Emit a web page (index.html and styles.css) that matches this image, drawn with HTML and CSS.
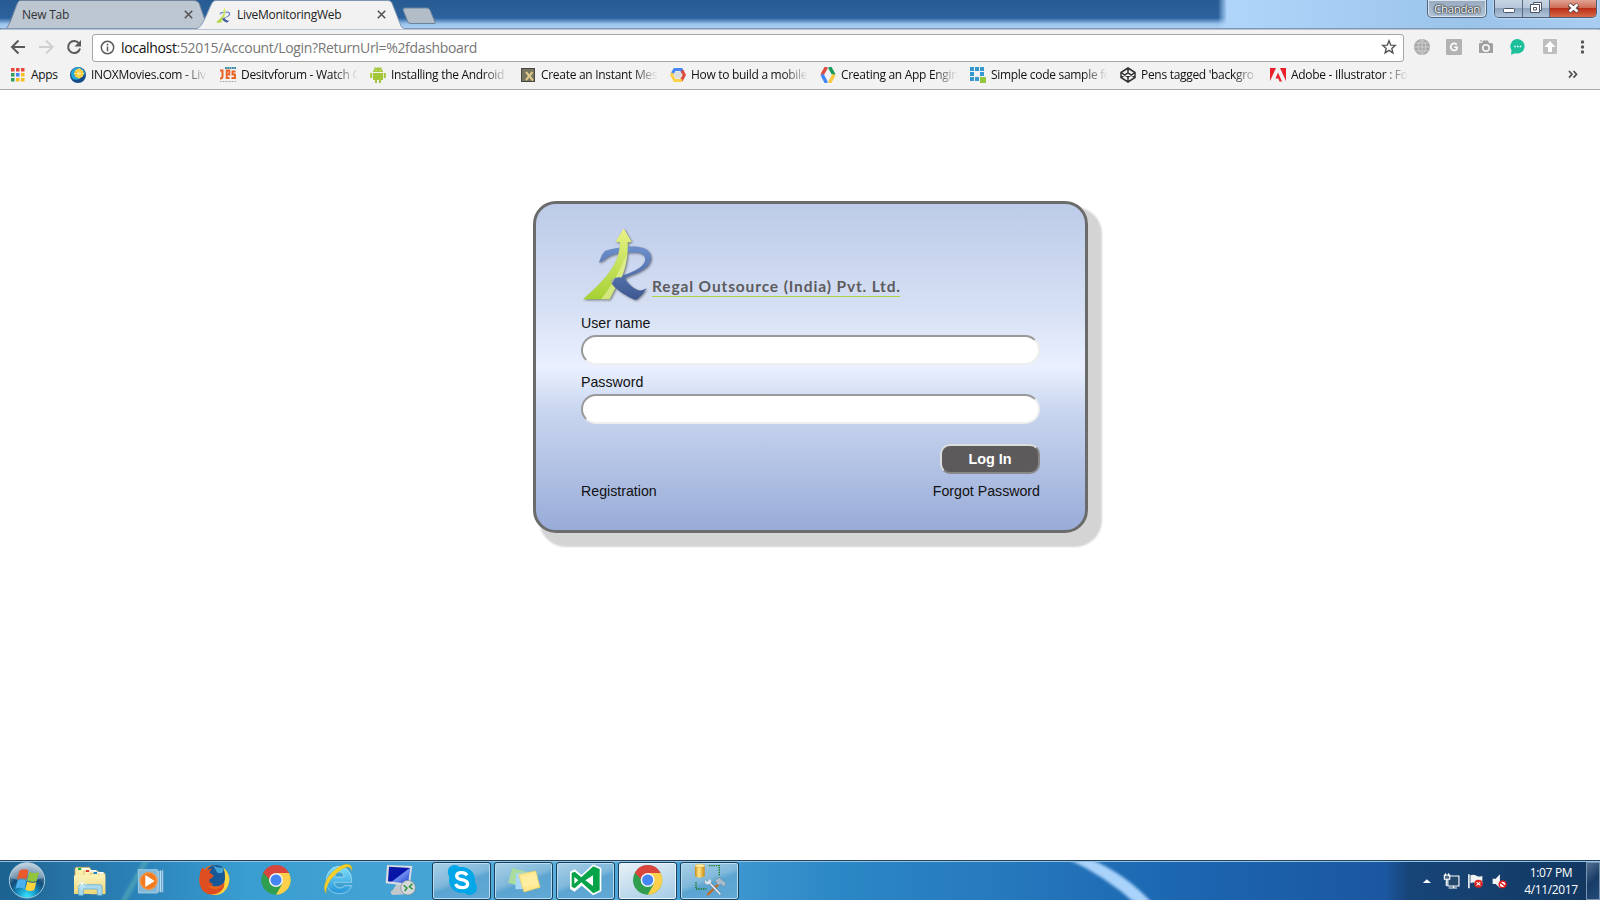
FILE: index.html
```html
<!DOCTYPE html>
<html lang="en">
<head>
<meta charset="utf-8">
<title>LiveMonitoringWeb</title>
<link rel="stylesheet" href="styles.css">
</head>
<body>
<svg width="0" height="0" class="defs">
  <defs>
    <linearGradient id="arrow" x1="0" y1="0" x2="0" y2="1"><stop offset="0" stop-color="#e9f287"/><stop offset="1" stop-color="#a5d133"/></linearGradient>
    <linearGradient id="rblue" x1="0" y1="0" x2="0" y2="1"><stop offset="0" stop-color="#6d90cd"/><stop offset="1" stop-color="#3d5690"/></linearGradient>
    <linearGradient id="folder" x1="0" y1="0" x2="0" y2="1"><stop offset="0" stop-color="#fbf3b7"/><stop offset="1" stop-color="#edd47a"/></linearGradient>
    <radialGradient id="orb" cx=".5" cy=".95" r=".9"><stop offset="0" stop-color="#35e3ff"/><stop offset=".35" stop-color="#1486b8"/><stop offset=".6" stop-color="#124b78"/><stop offset="1" stop-color="#9fb9cc"/></radialGradient>
    <linearGradient id="screen" x1="0" y1="0" x2="1" y2="1"><stop offset="0" stop-color="#0a1ca8"/><stop offset=".5" stop-color="#0612a8"/><stop offset=".55" stop-color="#6f8ff0"/><stop offset="1" stop-color="#1d3fd0"/></linearGradient>
    <linearGradient id="gold" x1="0" y1="0" x2="1" y2="0"><stop offset="0" stop-color="#c98a10"/><stop offset=".4" stop-color="#ffe88a"/><stop offset="1" stop-color="#c98a10"/></linearGradient>
    <linearGradient id="ie" x1="0" y1="0" x2="0" y2="1"><stop offset="0" stop-color="#7fe0fb"/><stop offset="1" stop-color="#2493d8"/></linearGradient>
    <symbol id="regal" viewBox="180 105 225 230">
      <path fill="url(#rblue)" d="M240 217 C245 203 251 188 259 182 C295 171 345 165 370 173 C397 180 402 204 390 222 C377 243 340 252 318 264 C325 282 350 299 362 301 C370 302 376 296 383 294 C373 309 361 324 350 329 C331 323 284 295 277 276 C275 265 287 263 303 259 C333 249 372 235 378 212 C382 194 365 187 344 187 C308 187 283 190 268 200 C257 207 250 216 240 217Z"/>
      <path fill="url(#arrow)" d="M192 327 C232 292 277 250 294 205 C300 188 302 172 303 156 L290 155 L314 115 L338 155 L326 157 C328 192 322 228 308 261 C285 260 275 266 277 279 C280 286 285 290 289 294 L272 327Z"/>
      <path fill="#f2f8b5" opacity=".55" d="M246 327 C277 288 308 233 323 192 C322 221 317 242 308 261 C285 260 275 266 277 279 L289 294 L272 327Z"/>
    </symbol>
    <symbol id="chrome" viewBox="0 0 90 90">
      <circle cx="45" cy="45" r="44" fill="#2f9e4f"/>
      <path d="M45 45 L6 24 A44 44 0 0 1 84 24Z" fill="#d9453d"/>
      <path d="M45 24 H84 A44 44 0 0 1 45 89 L64 56Z" fill="#fcd04b"/>
      <path d="M6 24 L27 57 L45 45 V24Z" fill="#2f9e4f"/>
      <path d="M7 23 H45 L27 45Z" fill="#d9453d"/>
      <circle cx="45" cy="45" r="21" fill="#f4f4f4"/><circle cx="45" cy="45" r="16.500" fill="#4486f4"/>
    </symbol>
  </defs>
</svg>

<div class="desktop">
  <header class="tabstrip">
    <svg class="tabshapes" width="1600" height="30" viewBox="0 0 1600 30">
      <path d="M6 28.500 C10 26 14 10 18 2 Q19 .5 21 .5 H194 Q197 .5 199 3 L208 28.500Z" fill="#bdc7d2" stroke="#72839a"/>
      <path d="M0 30 V28.500 H197 C203 27 208 10 212 3 Q213 .5 216 .5 H388 Q391 .5 392 3 L401 26 Q402 28.500 405 28.500 H1600 V30Z" fill="#f2f2f2" stroke="#7f97b5"/>
      <path d="M403 10 Q403 8 405 8 H427 Q429 8 430 10 L435 22 Q436 23.500 434 23.500 H411 Q409 23.500 408 22Z" fill="#b3bdc8" stroke="#6d839d"/>
    </svg>
    <div class="tab tab-idle"><span>New Tab</span><svg width="9" height="9" viewBox="0 0 9 9"><path class="x" d="M.8.8l7.400 7.400M8.200.8L.8 8.200"/></svg></div>
    <div class="tab tab-active"><svg width="16" height="16"><use href="#regal"/></svg><span class="tab-title">LiveMonitoringWeb</span><svg width="9" height="9" viewBox="0 0 9 9"><path class="x" d="M.8.8l7.400 7.400M8.200.8L.8 8.200"/></svg></div>
    <div class="winctl">
      <div class="user">Chandan</div>
      <div class="btns">
        <div class="wb min"><svg width="28" height="17"><rect x="8.500" y="8.500" width="11" height="4" rx="1" fill="#fff" stroke="#4a5365"/></svg></div>
        <div class="wb max"><svg width="27" height="17"><path d="M10.500 2.500h8v8h-2v2h-9v-8h3z" fill="#fff" stroke="#4a5365"/><path d="M10.500 7.500h3v2.500h-3zM10.500 4.500h6v6" fill="none" stroke="#4a5365"/></svg></div>
        <div class="wb close"><svg width="46" height="17"><path d="M19 4.500l9 7M28 4.500l-9 7" stroke="#59363a" stroke-width="4.600"/><path d="M19.500 4.500l8 7M27.500 4.500l-8 7" stroke="#fff" stroke-width="2.800"/></svg></div>
      </div>
    </div>
  </header>

  <nav class="toolbar">
    <svg class="navicons" width="92" height="34" viewBox="0 0 92 34" fill="none" stroke="#5a5a5a" stroke-width="2">
      <path d="M25 18H12.500M18.500 11.500L12 18l6.500 6.500"/>
      <path stroke="#d0d0d0" d="M39 18h12.500M46 11.500l6.500 6.500-6.500 6.500"/>
      <path d="M79 14.500A6 6 0 1 0 80 19.500"/><path fill="#5a5a5a" stroke="none" d="M81 11v6.500h-6.500z"/>
    </svg>
    <div class="omnibox">
      <svg width="15" height="15" viewBox="0 0 15 15" fill="none" stroke="#5a5a5a" stroke-width="1.500"><circle cx="7.500" cy="7.500" r="6.200"/><path d="M7.500 6.500v4.700M7.500 3.800v1.600"/></svg>
      <div class="url"><b>localhost</b>:52015/Account/Login?ReturnUrl=%2fdashboard</div>
      <svg width="16" height="16" viewBox="0 0 16 16" fill="none" stroke="#555" stroke-width="1.400"><path d="M8 1.800l1.700 4.300 4.600.3-3.500 3 1.100 4.500L8 11.400l-3.900 2.500 1.100-4.500-3.500-3 4.600-.3z"/></svg>
    </div>
    <div class="exts">
      <svg width="16" height="16"><circle cx="8" cy="8" r="8" fill="#a9a9a9"/><path d="M0 8h16M8 0v16M2 4h12M2 12h12M8 0q-8 8 0 16q8-8 0-16" fill="none" stroke="#d4d4d4" stroke-width=".8"/></svg>
      <svg width="16" height="16"><rect width="16" height="16" rx="1" fill="#b2b2b2"/><path d="M10.800 5.600A3.500 3.500 0 1 0 11 10V8.300H8.300" fill="none" stroke="#fff" stroke-width="1.600"/></svg>
      <svg width="16" height="16"><path d="M1.500 4H4l1-2.500h5L11 4h2.500q1.500 0 1.500 1.500v8.500H1V5.500Q1 4 1.500 4z" fill="#a0a0a0"/><circle cx="8" cy="9" r="3.200" fill="#a0a0a0" stroke="#f2f2f2" stroke-width="1.700"/><path d="M2 2h2" stroke="#a0a0a0"/></svg>
      <svg width="16" height="16"><path d="M8 0a7.300 7.300 0 1 1-3 14.200L1 15.700l.5-4.500A7.300 7.300 0 0 1 8 0z" fill="#1dbf9b"/><path d="M4.300 7.500h1.500m1.200 0h1.500m1.200 0h1.500" stroke="#fff" stroke-width="1.500"/></svg>
      <svg width="16" height="16"><rect x="1" y="0" width="14" height="15" rx="1" fill="#bebebe"/><path d="M8 2l5.500 6H10v5H6V8H2.500z" fill="#fff"/></svg>
      <svg width="16" height="16"><g fill="#555"><circle cx="8.500" cy="3" r="1.700"/><circle cx="8.500" cy="8" r="1.700"/><circle cx="8.500" cy="13" r="1.700"/></g></svg>
    </div>
  </nav>

  <nav class="bookmarks">
    <div class="bm apps"><svg width="14" height="14"><g><path fill="#e8453c" d="M0 0h3.500v3.500H0zM5 0h3.500v3.500H5zM10 0h3.500v3.500H10z"/><path fill="#2f9e57" d="M0 5h3.500v3.500H0zM0 10h3.500v3.500H0z"/><path fill="#4486f4" d="M5 5h3.500v3.500H5z"/><path fill="#f5bd1f" d="M10 5h3.500v3.500H10zM5 10h3.500v3.500H5zM10 10h3.500v3.500H10z"/></g></svg><span>Apps</span></div>
    <div class="bm"><svg width="16" height="16"><circle cx="8" cy="8" r="8" fill="#174b87"/><path d="M1 6a7 7 0 0 1 10-5q4 3 4 6-7 8-12 5-2-2-2-6" fill="#25a9dd"/><circle cx="9" cy="6.500" r="4.700" fill="#f9c526"/><path d="M9 1v11M4 6.500h10M5.500 3l7 7M12.500 3l-7 7" stroke="#fff2a8" stroke-width=".7"/></svg><span>INOXMovies.com - Liv</span></div>
    <div class="bm"><svg width="16" height="16"><path d="M0 3.500h2.500v6q0 2-2.500 2" stroke="#ea6225" stroke-width="2" fill="none"/><path d="M9.500 11H6.700V3.500h2.600v4H6.700M15.500 4.500h-3v3h2.500v3.500h-3.500" stroke="#ea6225" stroke-width="1.900" fill="none"/><path d="M5 1h11" stroke="#2f88a5" stroke-width="2" stroke-dasharray="1.800 .5"/><path d="M0 14.500h16" stroke="#aaa" stroke-dasharray="1 .5"/></svg><span>Desitvforum - Watch O</span></div>
    <div class="bm"><svg width="16" height="16" fill="#a4c639"><path d="M3 5a5 4.500 0 0 1 10 0zM3 6h10v7H3z"/><path d="M1.200 6v5M14.800 6v5M6 12v4M10 12v4" stroke="#a4c639" stroke-width="2"/><path d="M4.500 0l2 2M11.500 0l-2 2" stroke="#a4c639"/><path d="M5.500 3.500h1M9.500 3.500h1" stroke="#fff"/></svg><span>Installing the Android</span></div>
    <div class="bm"><svg width="16" height="16"><rect x="1.500" y="1.500" width="13" height="13" fill="#77745f" stroke="#48473d"/><path d="M6 5l7 8.500M12.500 5L6 13" stroke="#dec98c" stroke-width="2"/></svg><span>Create an Instant Mes</span></div>
    <div class="bm"><svg width="16" height="16" fill="none" stroke-width="3"><path d="M2 7L4.700 2.500h6.600L13 6" stroke="#4486f4"/><path d="M12 3.500L14.300 8l-3 5.500" stroke="#df4b3e"/><path d="M2.500 6L1.700 8l3 5.500H12" stroke="#fbd14a"/><circle cx="8" cy="8" r="3.500" fill="#ddd" stroke="none"/></svg><span>How to build a mobile</span></div>
    <div class="bm"><svg width="16" height="16" fill="none" stroke-width="3.500"><path d="M6.500 0L2 8" stroke="#df4b3e"/><path d="M2 7.500L6.500 16" stroke="#4486f4"/><path d="M9.500 0L14 8" stroke="#179b5b"/><path d="M14 7.500L9.500 16" stroke="#fbc93d"/></svg><span>Creating an App Engin</span></div>
    <div class="bm"><svg width="16" height="16" fill="#3598cf"><path d="M0 0h4v4H0zM5 0h4v4H5zM10 0h4v4h-4zM0 5h4v4H0zM10 5h4v4h-4zM0 10h4v4H0zM5 10h4v4H5z"/><path fill="#93c83d" d="M10 10h6v6h-6z"/></svg><span>Simple code sample fo</span></div>
    <div class="bm"><svg width="16" height="16" fill="none" stroke="#333" stroke-width="1.500"><path d="M8 1l7 4.500v5L8 15l-7-4.500v-5zM8 1v4.700M8 10.300V15M1 5.500l7 4.700 7-4.700M1 10.500l7-4.700 7 4.700"/></svg><span>Pens tagged 'backgro</span></div>
    <div class="bm"><svg width="16" height="16" fill="#e8212b"><path d="M0 1h6L0 14zM10 1h6v13zM8 5.500l4 9H9.500L8.300 11.500H5.500z"/></svg><span>Adobe - Illustrator : Fo</span></div>
    <svg class="more" width="10" height="9" viewBox="0 0 10 9" fill="none" stroke="#505050" stroke-width="1.700"><path d="M1 1l3 3.300-3 3.300M5.500 1l3 3.300-3 3.300"/></svg>
  </nav>

  <main class="page">
    <form class="card">
      <div class="brand">
        <svg class="logo" width="75" height="77"><use href="#regal"/></svg>
        <div class="company">Regal Outsource (India) Pvt. Ltd.</div>
      </div>
      <label for="u">User name</label>
      <input id="u" type="text">
      <label for="p">Password</label>
      <input id="p" type="password">
      <div class="actions"><button type="button">Log In</button></div>
      <div class="links"><span>Registration</span><span>Forgot Password</span></div>
    </form>
  </main>

  <footer class="taskbar">
    <svg class="streak" width="1600" height="38" viewBox="0 0 1600 38">
      <defs><filter id="soft"><feGaussianBlur stdDeviation="1.700"/></filter></defs>
      <path d="M1068 -3 Q1105 14 1136 42 L1153 42 Q1126 12 1090 -3Z" fill="#a9d3fb" filter="url(#soft)"/>
      <path d="M147 -3L123 40" stroke="#77c9b8" stroke-width="5" opacity=".4" filter="url(#soft)"/>
    </svg>
    <svg class="start" width="58" height="38" viewBox="0 36 174 114">
      <circle cx="81" cy="91" r="53" fill="url(#orb)" stroke="#a9c7da" stroke-width="3"/>
      <path d="M31 83a50 45 0 0 1 100 0q-50 20-100 0" fill="#fff" opacity=".3"/>
      <path d="M58 62q14-8 27-1l-6 27q-13-6-28 0z" fill="#e9592c"/><path d="M88 65q13 8 29 1l-7 27q-14 6-28-2z" fill="#92c53e"/><path d="M53 91q13-6 26 1l-6 25q-13-7-27-1z" fill="#4cb0ee"/><path d="M82 94q13 8 27 2l-6 24q-14 6-27-1z" fill="#fdd23d"/>
    </svg>
    <svg class="pin" width="62" height="38" viewBox="174 36 186 114">
      <path d="M222 57q0-5 5-5h38l5 6v70h-48z" fill="url(#folder)" stroke="#c6a54f" stroke-width="2"/><path d="M249 64h44v60h-44zM268 70h44v62h-44z" fill="url(#folder)" stroke="#d0b565" stroke-width="2"/><path d="M219 76h94v56h-94z" fill="url(#folder)"/>
      <path d="M231 54h10v6h-10z" fill="#1cae3b"/><path d="M255 60h10v6h-10z" fill="#dc3d2e"/><path d="M278 66h10v6h-10z" fill="#1680d0"/><path d="M242 54h22v5h-22zM265 60h22v5h-22zM289 66h19v5h-19z" fill="#fff"/>
      <path d="M233 136v-26q0-6 6-6h58q6 0 6 6v26h-14v-19h-42v19z" fill="#a8d9ef" stroke="#59a9d0" stroke-width="2"/><path d="M243 85v35M228 102h30M234 91l18 22M252 91l-18 22" stroke="#e8fcff" stroke-width="2"/>
    </svg>
    <svg class="pin" width="62" height="38" viewBox="360 36 186 114">
      <path d="M470 62l17-3v69l-17-2z" fill="#b7def0" stroke="#4a8aba" stroke-width="2"/><path d="M412 59h57v70h-57z" fill="#83b9d9" stroke="#c2e1ef" stroke-width="2"/><path d="M475 61v66M482 60v67" stroke="#3584b7" stroke-width="2"/>
      <circle cx="443" cy="93" r="27" fill="#f27a20"/><circle cx="443" cy="93" r="25" fill="none" stroke="#f9b26a" stroke-width="2"/><path d="M433 75l28 18-28 18z" fill="#fff"/>
    </svg>
    <svg class="pin" width="62" height="38" viewBox="546 36 186 114">
      <circle cx="640" cy="90" r="44" fill="#e8651d"/><circle cx="645" cy="77" r="32" fill="#175996"/><path d="M637 47q14 8 29 6 4 10-5 17l-12-2z" fill="#45a6d8"/>
      <path d="M667 52q31 30 9 65-18 25-49 15 40-10 45-45 1-20-5-35" fill="#fbd642"/>
      <path d="M597 75q-1-15 10-23 1 8 7 10 10-7 19-6-9 8-6 14 8 2 11 7-3 8-14 12 1 9 12 12-5 10-16 5 7 12 26 12 17-5 24-22 2 20-14 31-25 14-48-2-15-15-13-43" fill="#dd4d20"/>
    </svg>
    <svg class="pin" width="62" height="38" viewBox="732 36 186 114"><use href="#chrome" x="780" y="45" width="90" height="90"/></svg>
    <svg class="pin" width="62" height="38" viewBox="918 36 186 114">
      <path fill-rule="evenodd" d="M976 92a38 40 0 0 1 76-6v11h-52q2 17 16 17 11 0 15-7h21q-9 24-38 24-38-2-38-39m25-11h28q-1-15-14-15-12 0-14 15" fill="url(#ie)" stroke="#d9f5fd" stroke-width="1.500"/>
      <path d="M976 130c-20-25 18-76 53-86 19-5 26 5 23 18-3-11-10-14-24-7-29 15-57 51-52 75" fill="#f8cf25" stroke="#d7a90f" stroke-width="1"/>
    </svg>
    <svg class="pin" width="62" height="38" viewBox="1104 36 186 114">
      <path d="M1187 102l20-2 3 18q14 5 7 15l-42 2q-13-8 1-16z" fill="#c3c8cc"/><path d="M1158 45l76 3-8 60-72-8z" fill="#d9dde1"/><path d="M1164 50l64 4-7 47-60-7z" fill="url(#screen)"/>
      <circle cx="1221" cy="113" r="22" fill="#d3d8da" stroke="#7d888e" stroke-width="2"/><path d="M1208 106l10 8-7 9M1234 101l-9 9 10 8" fill="none" stroke="#209030" stroke-width="4"/>
    </svg>
    <div class="task"><svg width="59" height="38" viewBox="33 36 177 114">
      <circle cx="123" cy="90" r="39" fill="#00a7e8"/><circle cx="101" cy="66" r="21" fill="#00a7e8"/><circle cx="146" cy="113" r="22" fill="#00a7e8"/>
      <path d="M138 76q-5-8-16-8-15 0-15 10 0 8 15 11 18 4 18 13 0 11-17 11-14 0-19-11" fill="none" stroke="#fff" stroke-width="10"/>
    </svg></div>
    <div class="task"><svg width="59" height="38" viewBox="219 36 177 114">
      <path d="M274 54l43 12-11 45-44-13z" fill="#a9dc9d"/><path d="M285 70l40-4 8 50-50 2z" fill="#a8d8f5"/><path d="M293 74l51-11 13 49-48 14z" fill="#ffe98e" stroke="#efd25c" stroke-width="2"/><path d="M302 81l44-11 7 35-48 6z" fill="#fff5bf" opacity=".4"/>
    </svg></div>
    <div class="task"><svg width="59" height="38" viewBox="405 36 177 114">
      <path d="M516 43l25 11v70l-25 12-34-29-21 18-14-8V65l14-7 21 17z" fill="#fff"/><path d="M517 49l19 8v64l-19 9-36-33-20 18-9-5V69l9-4 20 17zm-1 27l-23 15 23 17zM460 81v20l12-10z" fill="#07a348"/>
    </svg></div>
    <div class="task current"><svg width="59" height="38" viewBox="591 36 177 114"><use href="#chrome" x="635" y="45" width="90" height="90"/></svg></div>
    <div class="task"><svg width="59" height="38" viewBox="777 36 177 114">
      <path d="M822 47v32q14 8 29 0V47z" fill="url(#gold)"/><ellipse cx="836.500" cy="47" rx="14.500" ry="5" fill="#ffec9c" stroke="#bf8e1c"/>
      <path d="M864 47h31v32M825 96v21h31" fill="none" stroke="#167819" stroke-width="4" stroke-dasharray="4 3"/>
      <path d="M896 99l-37 36" stroke="#c76a1e" stroke-width="7"/><path d="M862 95l36 38" stroke="#596d83" stroke-width="8"/><path d="M862 95l36 38" stroke="#e2edf3" stroke-width="5"/><path d="M851 88l8 7 6-9q9 4 5 14-10 9-19-1z" fill="#dce7ef" stroke="#637c91"/><path d="M882 90l13-7 20 17-6 10-9-8-9 4z" fill="#a9bccb" stroke="#5d7389"/>
    </svg></div>
    <div class="tray">
      <svg width="108" height="38" viewBox="1065 36 282 114" preserveAspectRatio="none">
        <path d="M1104 99l10-11 11 11z" fill="#fff"/>
        <path d="M1169 78h29v30h-29zM1171 114h22M1184 108v6" fill="#23486b" stroke="#fff" stroke-width="3"/><path d="M1160 75h14v13h-14zM1165 86v22M1163 70v8M1171 70v8" fill="#506c88" stroke="#fff" stroke-width="3"/>
        <path d="M1224 73v42" stroke="#fff" stroke-width="4"/><path d="M1228 76q8-4 16 1t15 0v24q-8 4-16-1t-15 0z" fill="#f3f3f3"/><ellipse cx="1249" cy="101" rx="11" ry="12" fill="#df2424"/><path d="M1244 96l10 10M1254 96l-10 10" stroke="#fff" stroke-width="3"/>
        <path d="M1286 86h8l11-13v41l-11-12h-8z" fill="#f5f5f5"/><ellipse cx="1312" cy="103" rx="9" ry="10" fill="#fff" stroke="#df1a1a" stroke-width="4"/><path d="M1305 97l14 12" stroke="#df1a1a" stroke-width="4"/>
      </svg>
      <div class="clock"><span>1:07 PM</span><span>4/11/2017</span></div>
      <div class="peek"></div>
    </div>
  </footer>
</div>
</body>
</html>
```

FILE: styles.css
```css
* { box-sizing: border-box; }
body { margin: 0; background: #fff; font-family: "Open Sans", "Noto Sans", sans-serif; overflow: hidden; }
svg { display: block; flex: none; }
.defs { position: absolute; }
.desktop { width: 1600px; height: 900px; display: flex; flex-direction: column; }

/* tab strip */
.tabstrip { position: relative; height: 29px; display: flex; background:
  linear-gradient(90deg, transparent 1218px, #afd5fa 1227px, #9bc4eb 1470px, #a9cdf1 1600px),
  linear-gradient(180deg, #285b93 0, #2b629d 18px, #9bc4ec 24px, #b0d2f5 29px); }
.tabshapes { position: absolute; left: 0; top: 0; }
.tab { position: relative; height: 29px; display: flex; align-items: center; font-size: 12px; color: #222; letter-spacing: -.1px; }
.tab .x { stroke: #555; stroke-width: 1.6; fill: none; }
.tab-idle { width: 203px; padding: 0 10px 0 22px; justify-content: space-between; color: #333; }
.tab-idle span { letter-spacing: -.25px; }
.tab-active { width: 200px; padding: 0 17px 0 12px; }
.tab-title { margin-left: 6px; flex: 1; letter-spacing: -.27px; }
.winctl { position: relative; margin-left: auto; padding-right: 3px; display: flex; gap: 7px; align-items: flex-start; }
.user { width: 60px; height: 18px; border: 1px solid #53657c; border-top: 0; border-radius: 0 0 5px 5px; box-shadow: inset 0 0 0 1px #d8e5f1; background: linear-gradient(#9aabc0, #b0c3d7); color: #fff; font-size: 11.500px; line-height: 17px; text-align: center; letter-spacing: -.3px; text-shadow: 0 0 2px #222, 0 0 2px #222, 0 0 1px #222; }
.btns { display: flex; height: 18px; border: 1px solid #4c5d75; border-top: 0; border-radius: 0 0 5px 5px; overflow: hidden; box-shadow: 0 0 2px #fff; }
.wb { height: 17px; background: linear-gradient(#c8d5e3 0, #b7c8da 45%, #8fa5be 50%, #b0c6dc 100%); border-right: 1px solid #596b83; overflow: hidden; }
.min { width: 28px; }
.max { width: 27px; }
.close { width: 46px; border: 0; background: linear-gradient(#e1a393 0, #cf6e58 45%, #b92f16 50%, #d8694a 100%); }

/* toolbar */
.toolbar { height: 34px; background: #f2f2f2; display: flex; align-items: center; }
.omnibox { width: 1312px; height: 28px; margin-top: 3px; border: 1px solid #a6a6a6; border-radius: 3px; background: #fff; display: flex; align-items: center; padding: 0 6px 1px 7px; }
.url { flex: 1; margin-left: 6px; font-size: 14px; color: #777; letter-spacing: -.34px; }
.url b { font-weight: 400; color: #111; }
.exts { display: flex; gap: 16px; padding: 2px 0 0 10px; }

.bookmarks { height: 27px; background: #f2f2f2; border-bottom: 1px solid #aaa; display: flex; align-items: center; padding: 0 22px 3px 11px; }
.bm { width: 150px; display: flex; align-items: center; flex: none; font-size: 12px; color: #111; }
.bm span { width: 117px; margin-left: 5px; white-space: nowrap; letter-spacing: -.3px; -webkit-mask-image: linear-gradient(90deg, #000 92px, transparent 117px); mask-image: linear-gradient(90deg, #000 92px, transparent 117px); }
.bm.apps { width: 59px; }
.bm.apps span { width: 32px; margin-left: 6px; -webkit-mask-image: none; mask-image: none; }
.more { margin-left: auto; }

/* login page */
.page { height: 770px; padding: 111px 0 0 533px; }
.card { width: 555px; height: 332px; border: 3px solid #6b6b6b; border-radius: 23px; padding: 24px 45px; box-shadow: 10px 10px 2px 4px #d4d4d4; background: linear-gradient(#bccbe8 0, #d6e0f4 32%, #eaf0ff 50%, #c8d5ef 64%, #99acd8 100%); font: 15px/17px "Liberation Sans", Arial, sans-serif; color: #111; display: flex; flex-direction: column; }
.brand { display: flex; height: 82px; margin-left: -1px; }
.logo { margin: -3px 1px 0 -1px; filter: drop-shadow(1px 1px 1px #3339); }
.company { align-self: flex-start; margin: 48px 0 0 -3px; width: 248px; height: 21px; border-bottom: 1px solid #acd43c; color: #5c5b5d; font: 700 15.500px/20px Lato, sans-serif; letter-spacing: .87px; white-space: nowrap; }
.card label { height: 25px; padding-top: 5px; font-size: 14.200px; }
.card input { width: 459px; height: 30px; margin: 0 0 4px; padding: 0 12px; border: 2px solid; border-color: #999 #eee #eee #999; border-radius: 15px; background: #fff; }
.actions { display: flex; justify-content: flex-end; margin-top: 16px; }
.actions button { width: 100px; height: 30px; padding: 0; border: 2px solid; border-color: #ddd #888 #888 #ddd; border-radius: 10px; background: #5c5a5b; color: #fff; font: 700 14.400px "Liberation Sans", Arial, sans-serif; }
.links { display: flex; justify-content: space-between; margin-top: 9px; font-size: 14.200px; }

/* taskbar */
.taskbar { position: relative; height: 40px; display: flex; border-top: 1px solid #263f5a; box-shadow: inset 0 1px #92c4e6; padding-top: 1px; background: linear-gradient(90deg, #1c618f 0, #2672a4 60px, #2a83b9 140px, #3a9ed0 250px, #46a4d5 430px, #5aaedb 560px, #3f98d0 720px, #2b87c5 840px, #2679bd 1000px, #1c66b1 1180px, #1b57a0 1385px, #174578 1408px, #123760 1600px); }
.streak { position: absolute; left: 0; top: 1px; }
.start, .pin { position: relative; }
.start { margin-right: 1px; }
.pin { margin-right: 0; }
.task { position: relative; width: 59px; height: 38px; margin: 0 2px 0 1px; border: 1px solid #17405f; border-radius: 3px; box-shadow: inset 0 0 0 1px #b8dcf0; background: linear-gradient(160deg, #a9d0e7 0, #80b8da 45%, #5ba4d1 55%, #62a9d5 100%); overflow: hidden; }
.task svg { margin: -1px; }
.task.current { background: linear-gradient(160deg, #e8f2f7 0, #c8dfee 45%, #a4cbe5 100%); box-shadow: inset 0 0 0 1px #eaf6fc; }
.tray { position: relative; display: flex; margin-left: auto; }
.clock { width: 70px; display: flex; flex-direction: column; align-items: center; padding-top: 2px; color: #fff; font-size: 12px; line-height: 17px; letter-spacing: -.35px; }
.peek { width: 14px; height: 38px; border: 1px solid #7893b0; background: linear-gradient(135deg, #526f91, #183c66 50%, #244b7c); }
```
